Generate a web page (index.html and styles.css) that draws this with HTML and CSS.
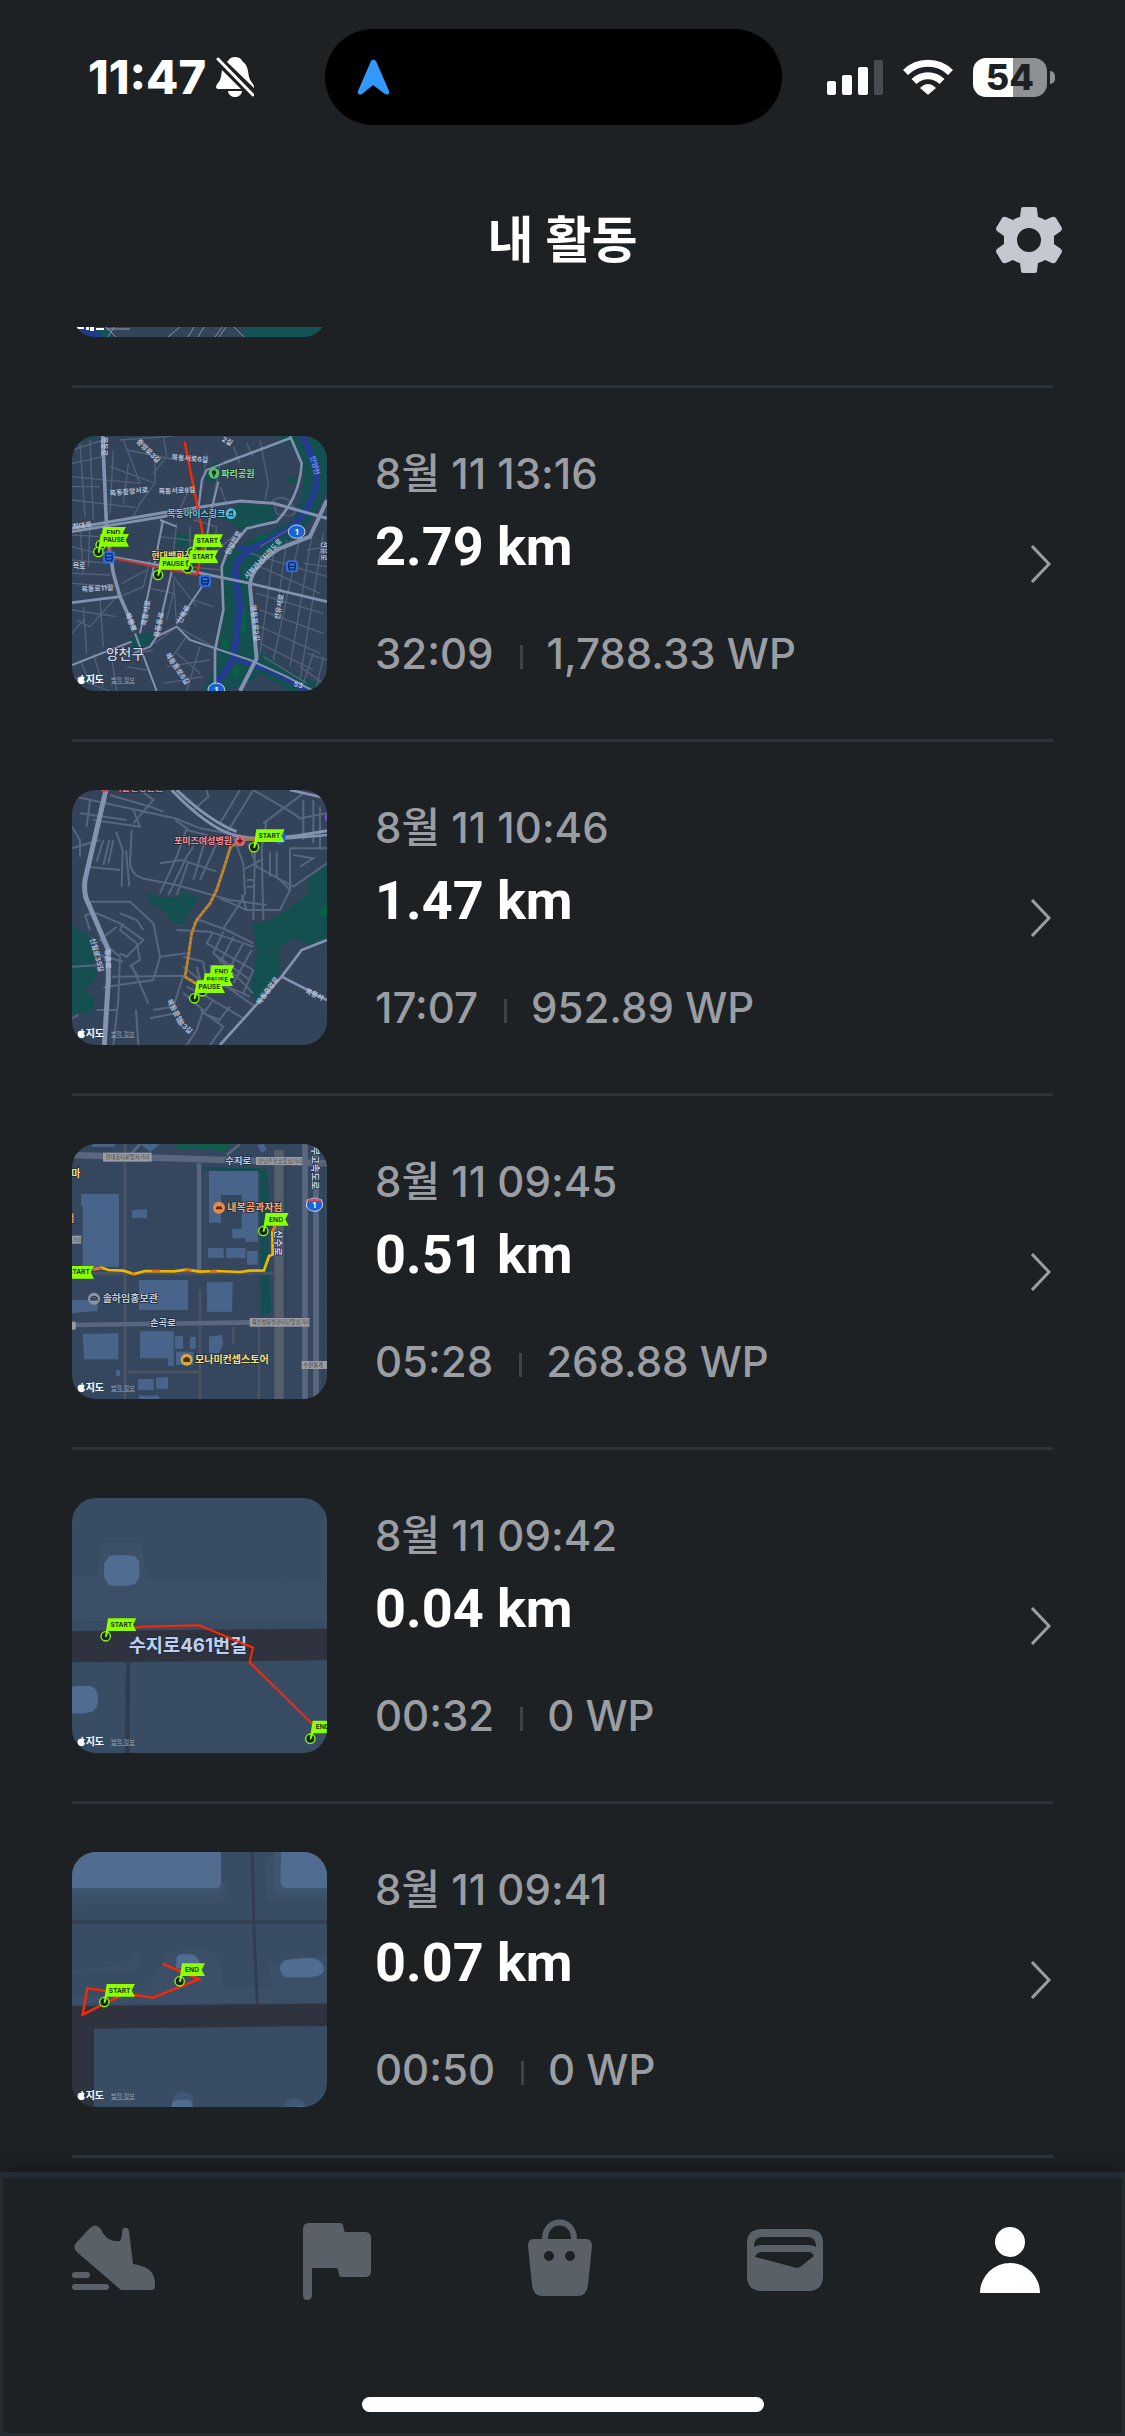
FILE: index.html
```
<!DOCTYPE html>
<html lang="ko">
  <head>
    <meta charset="UTF-8" />
    <meta name="viewport" content="width=device-width, initial-scale=1.0" />
    <title>내 활동</title>
    <link rel="stylesheet" href="styles.css" />
  </head>

  <body>
    <!-- shapes shared by all the maps -->
    <svg class="sprite" aria-hidden="true">
      <defs>
        <g id="flag-long">
          <circle r="14" fill="#1a2420" stroke="#8cff00" stroke-width="4" />
          <path d="M7 -54H92L82 -35L92 -16H9L3 2H-2Z" fill="#8cff00" />
        </g>
        <g id="flag-short">
          <circle r="14" fill="#1a2420" stroke="#8cff00" stroke-width="4" />
          <path d="M7 -54H76L66 -35L76 -16H9L3 2H-2Z" fill="#8cff00" />
        </g>
        <g id="apple">
          <path d="M11 6C15 3 21 5 22 8C18 11 19 17 23 19C21 26 17 29 12 26C6 29 1 22 1 15C1 7 6 4 11 6Z" fill="#fff" />
          <path d="M11 5C11 1 14 -1 17 -1C17 3 14 5 11 5Z" fill="#fff" />
        </g>
        <g id="station">
          <rect x="-18" y="-18" width="36" height="36" rx="9" fill="#2d6fe0" />
          <rect x="-10" y="-11" width="20" height="20" rx="5" fill="none" stroke="#0d2a5c" stroke-width="4" />
          <path d="M-10 0H10M-8 13L-5 9M8 13L5 9" stroke="#0d2a5c" stroke-width="4" />
        </g>
      </defs>
    </svg>

    <div class="app">
      <div class="status-bar">
        <div class="status-left">
          <span class="time">11:47</span>
          <svg class="bell" viewBox="0 0 38 42" fill="#fff">
            <path d="M19 1C24 1 26 4 27 6C32 9 32 16 33 21C34 25 37 27 38 30V32L11 6C13 4 14 1 19 1Z" />
            <path d="M6 14L25 33H2C-1 33 0 29 2 27C5 24 5 20 6 14Z" />
            <path d="M12 35H26C25 43 13 43 12 35Z" />
            <path d="M2 3L37 39" stroke="#fff" stroke-width="3" stroke-linecap="round" />
          </svg>
        </div>
        <div class="island">
          <svg viewBox="0 0 33 36">
            <path d="M14 2Q16 -1 19 2L32 32Q33 37 28 35L16 26L5 35Q0 37 1 32Z" fill="#3299ff" />
          </svg>
        </div>
        <div class="status-right">
          <svg class="signal" viewBox="0 0 56 35" fill="#fff">
            <rect y="21" width="9" height="14" rx="2" />
            <rect x="15" y="15" width="10" height="20" rx="2" />
            <rect x="31" y="7" width="10" height="28" rx="2" />
            <rect x="47" width="9" height="35" rx="2" fill="#484c50" />
          </svg>
          <svg class="wifi" viewBox="0 0 50 36">
            <path d="M2.500 13.500A32 32 0 0 1 47.500 13.500" fill="none" stroke="#fff" stroke-width="7" />
            <path d="M11 22.500A20 20 0 0 1 39 22.500" fill="none" stroke="#fff" stroke-width="7" />
            <path d="M17 29Q25 21 33 29L26 35Q25 36 24 35Z" fill="#fff" />
          </svg>
          <div class="battery">
            <span class="battery-body">54</span>
            <span class="battery-nub"></span>
          </div>
        </div>
      </div>

      <header class="header">
        <h1>내 활동</h1>
        <button class="settings" type="button" aria-label="설정">
          <svg viewBox="0 0 66 66">
            <path fill="#c5c8d0" fill-rule="evenodd" d="M27 0H39Q41 0 41 2L42 10Q46 11 49 13L56 10Q58 9 60 11L66 21Q66 23 65 24L58 29V37L65 42Q66 43 66 45L60 55Q58 57 56 56L49 53Q46 55 42 56L41 64Q41 66 39 66H27Q25 66 25 64L24 56Q20 55 17 53L10 56Q8 57 6 55L0 45Q0 43 1 42L8 37V29L1 24Q0 23 0 21L6 11Q8 9 10 10L17 13Q20 11 24 10L25 2Q25 0 27 0ZM33 21A12 12 0 1 0 33 45A12 12 0 1 0 33 21Z" />
          </svg>
        </button>
      </header>

      <main class="activities">
        <div class="scrolled-item">
          <div class="scrolled-map">
            <svg class="map" viewBox="0 -245 255 255">
              <path d="M0 -245H255V10H0Z" fill="#33435a" />
              <path d="M0 -30H26L30 10H0Z" fill="#213b8c" />
              <path d="M24 0H33L40 10H30Z" fill="#125455" />
              <path d="M172 -30H255V10H172Z" fill="#125455" />
              <path d="M34 0L44 10M36 10L42 0M116 10L122 0M126 10L132 0M143 10L150 0M147 10L154 0M162 0L172 10M96 10L108 0" stroke="#8391aa" />
              <path d="M5 0H12V2H5ZM14 0H17V3H14ZM18 0H22V4H18ZM24 1H32V3H24Z" fill="#fff" />
              <path d="M34 2H58" stroke="#93a0b4" />
            </svg>
          </div>
        </div>

        <ul class="activity-list">
          <li>
            <a class="activity" href="#">
              <svg class="map" viewBox="36 48 765 765">
                <rect x="36" y="48" width="765" height="765" fill="#334359" />
                <g fill="#13504f">
                  <path d="M680 48H801V210Q780 270 730 325L640 400L590 450Q560 500 575 560L590 690L700 760L801 800V813H690L600 760Q560 813 430 813L465 740L490 590L480 440L530 380L700 300Q740 230 725 130Z" />
                  <path d="M465 290L540 252L635 258Q655 290 640 312L540 330L510 305Z" />
                  <path d="M430 180L465 122L482 140L470 185ZM346 340H390V382H346ZM210 655L260 635L285 655L245 685L215 682ZM655 48H690V70H660ZM684 174H711V191H684ZM60 48H110V60H70Z" />
                </g>
                <path d="M538 560H556V640H538ZM485 655H502V680H485ZM522 735L545 745L530 770H518ZM590 340L640 350L600 380Z" fill="#0b6145" />
                <path d="M728 48L755 110Q780 150 765 205Q745 280 690 325L600 375Q530 400 525 460L540 560L520 720L470 790" fill="none" stroke="#233c90" stroke-width="20" />
                <path d="M520 715L650 760L740 813M530 380L590 392" fill="none" stroke="#233c90" stroke-width="14" />
                <g fill="none" stroke="#51617a" stroke-width="4">
                  <path d="M36 90L130 60M36 130L130 110M36 170L240 190M60 70L75 290M90 60L100 300M36 200H120M36 240L225 262M160 90L150 280M190 60L240 190M150 140L285 190M205 130L190 250M240 60L285 120L285 190L240 250L220 290M310 48L320 110L280 160" />
                  <path d="M180 60L340 48M200 90L350 120M36 345L120 350M36 380L110 400M60 320L70 460M90 310L85 440M36 420L145 430M36 460L150 465M36 490L165 500M36 570L170 590M70 560L80 700M120 540L130 680M170 530L90 620L50 600M36 640L70 600M305 300L290 420M350 310L335 450M300 350L420 365M290 430L480 450M390 320V410" />
                  <path d="M270 505L340 520L320 600M340 480L350 615M185 490L260 450M180 530L250 500L270 420M340 470L410 560M400 540L460 560M440 100L430 180L410 300M480 130L450 290M560 70L580 110M520 80L540 130M600 60L625 190L615 240M480 200L500 250M400 300L470 320L460 400L530 340M390 200L350 290" />
                  <path d="M570 400L801 470M640 400L600 700M680 360L650 580M720 350L640 720M760 320L690 740M790 340L720 780M600 440L780 520M590 520L790 580M600 570L790 640M600 620L780 700M600 670L760 750M610 710L740 790M740 390L801 380M730 430L801 440M640 240Q680 220 700 260T650 280Z" />
                  <path d="M36 770L150 813M60 720L90 790M100 700L130 800M150 680L170 813M190 710L280 690M200 740L260 750M270 680L350 620L460 680M350 700L420 760M380 650L330 720M420 680L380 813M320 740L450 720M310 790L430 770M740 700L801 720M720 740L790 790M760 700L730 790M790 710L770 800M600 380L700 320" />
                </g>
                <g fill="none" stroke="#8191ae" stroke-width="8">
                  <path d="M128 48L140 330L160 460L180 530L225 630" stroke-width="11" />
                  <path d="M36 325L300 280L540 243L640 250L801 295" stroke-width="9" />
                  <path d="M36 335L310 290L420 262M36 548L180 530M150 410L400 455L570 490L801 545M490 130L690 55M400 800" />
                  <path d="M690 48L725 130Q720 230 650 305L560 325L500 400L485 440L490 570L465 690V813" />
                  <path d="M801 240L750 350L660 385Q570 440 570 500L590 715L540 813" stroke-width="12" />
                  <path d="M300 300L350 320M310 300L240 640M335 455L290 650L350 620L390 660L570 720L680 770L760 813M36 735L150 690L215 665M440 480L350 610M475 185L450 290L430 430M490 130L440 150L425 180L415 270M225 640L290 813M220 700L270 680L290 650" stroke-width="6" />
                </g>
                <path d="M374 65L432 360L412 465" fill="none" stroke="#ff2600" stroke-width="7" />
                <path d="M150 385L160 415L412 465" fill="none" stroke="#bd3733" stroke-width="6" />
                <g class="road-text">
                  <text x="334" y="118" transform="rotate(5 334 118)">목동서로6길</text>
                  <text x="150" y="228" transform="rotate(-6 150 228)">목동중앙서로</text>
                  <text x="296" y="222" transform="rotate(-3 296 222)">목동서로8길</text>
                  <text x="228" y="66" transform="rotate(45 228 66)">중앙로3길</text>
                  <text x="125" y="50" transform="rotate(90 125 50)">목동로</text>
                  <text x="484" y="62" transform="rotate(30 484 62)">2길</text>
                  <text x="38" y="328" transform="rotate(-8 38 328)">희대로</text>
                  <text x="38" y="445">목로</text>
                  <text x="65" y="516" transform="rotate(-4 65 516)">목동로11길</text>
                  <text x="195" y="582" transform="rotate(68 195 582)">목동로</text>
                  <text x="258" y="618" transform="rotate(-80 258 618)">목동서로</text>
                  <text x="296" y="654" transform="rotate(-78 296 654)">목동동로</text>
                  <text x="362" y="612" transform="rotate(-60 362 612)">신목로</text>
                  <text x="508" y="406" transform="rotate(-62 508 406)">안양천로</text>
                  <text x="562" y="478" transform="rotate(-47 562 478)">서부간선지하도로</text>
                  <text x="572" y="555" transform="rotate(84 572 555)">영등포로2길</text>
                  <text x="658" y="600" transform="rotate(-80 658 600)">선유서로</text>
                  <text x="315" y="704" transform="rotate(56 315 704)">목동동로6길</text>
                  <text x="786" y="364" transform="rotate(90 786 364)">선유로</text>
                  <text x="700" y="798" transform="rotate(15 700 798)">53</text>
                </g>
                <text class="river-text" x="750" y="110" transform="rotate(75 750 110)">안양천</text>
                <circle cx="462" cy="160" r="16" fill="#5cc06a" />
                <path d="M462 150A8 8 0 0 1 464 165V171H460V165A8 8 0 0 1 462 150Z" fill="#123a26" />
                <text class="poi" x="484" y="171" fill="#84e28d">파리공원</text>
                <text class="poi" x="322" y="291" fill="#70c7de">목동아이스링크</text>
                <circle cx="513" cy="281" r="16" fill="#52b9d7" />
                <path d="M505 287H521M509 283V277L517 274V283" fill="none" stroke="#12384a" stroke-width="4" />
                <text class="poi" x="274" y="418" fill="#ffcf5a">현대백화점</text>
                <text class="district" x="137" y="716">양천구</text>
                <use href="#station" x="147" y="412" />
                <use href="#station" x="435" y="483" />
                <use href="#station" x="696" y="439" />
                <ellipse cx="710" cy="335" rx="25" ry="20" fill="#1b62d4" stroke="#c7d8f5" stroke-width="3" />
                <text class="shield" x="710" y="344">1</text>
                <ellipse cx="469" cy="809" rx="25" ry="20" fill="#1b62d4" stroke="#c7d8f5" stroke-width="3" />
                <text class="shield" x="469" y="818">1</text>
                <use href="#flag-short" x="122" y="375" />
                <text class="flag-text" x="160" y="346">END</text>
                <use href="#flag-long" x="115" y="396" />
                <text class="flag-text" x="162" y="367">PAUSE</text>
                <use href="#flag-long" x="397" y="397" />
                <text class="flag-text" x="442" y="370">START</text>
                <use href="#flag-long" x="383" y="445" />
                <text class="flag-text" x="429" y="417">START</text>
                <use href="#flag-long" x="294" y="465" />
                <text class="flag-text" x="340" y="437">PAUSE</text>
                <use href="#apple" x="52" y="765" />
                <text class="brand" x="77" y="789">지도</text>
                <text class="legal" x="153" y="787">법적 정보</text>
              </svg>
              <div class="info">
                <p class="date">8월 11 13:16</p>
                <p class="distance">2.79 km</p>
                <p class="stats"><span>32:09</span><span class="points">1,788.33 WP</span></p>
              </div>
              <svg class="chevron" viewBox="0 0 20 38"><path d="M1 1L18 19L1 37" /></svg>
            </a>
          </li>

          <li>
            <a class="activity" href="#">
              <svg class="map" viewBox="36 30 765 765">
                <rect x="36" y="30" width="765" height="765" fill="#334359" />
                <g fill="#155050">
                  <path d="M256 338L300 350L350 352L375 335L418 352L390 390L370 432L330 425L315 395L270 370Z" />
                  <path d="M801 255V485L750 495L700 475L660 500V580L590 665L570 630L590 520L580 430L620 425L690 385L745 340V290Z" />
                  <path d="M36 435V700H95L105 655L70 630L105 600V560L90 470Z" />
                </g>
                <path d="M801 375L775 400L790 412L801 405Z" fill="#086149" />
                <g fill="none" stroke="#56667f" stroke-width="6">
                  <path d="M36 48L220 88L345 115L420 145L560 170M150 45L270 80L310 95M240 30L280 60L220 130M36 140L60 180V230M36 205L120 180M60 100L200 120M90 60L80 140M100 120L240 140L220 90M130 180L110 245M148 180L130 255M160 180L145 250M80 260L180 270M168 155L188 210L185 320M198 210L208 320" />
                  <path d="M215 150L210 250Q215 290 260 298L350 315L510 360L620 375M345 120L380 145L350 230L300 340M380 150L440 165L400 300M300 250L365 240L470 275M325 345L380 230L400 200M350 345L385 245M440 185L480 195M420 300L470 190M540 30L480 130M580 30L500 160M440 30L445 50L400 90M580 30L700 100L720 115L801 100" />
                  <path d="M610 130L730 40M520 170L550 250L555 340L540 370L490 445M585 210L580 420M605 200L610 420M550 270L610 235M565 190L590 260L700 320L801 250M620 120L605 205M690 205V330L660 390H560L480 355M630 215V290M650 215V290L690 330M700 225L760 235L720 260M730 60V180M760 60V190M780 80V210M690 205H801M560 300H580M560 320H580M545 345L560 390" />
                  <path d="M75 365H210L280 430L300 530L280 600L130 622M75 405L110 400L180 430L250 480L200 530L180 520M75 405L90 450M180 400L230 420L250 450M170 440L120 480L180 530L175 660L160 795M190 430L180 450L230 490L240 540L215 555L265 670M100 520L190 545M155 590L370 587L340 680L280 690M270 715L345 700M300 530L380 520" />
                  <path d="M350 450L450 455L580 500M400 430L420 420L500 450L580 490M370 530L430 545M370 560L420 600L500 620L585 680M460 455L440 490L580 570M490 455L460 520L570 600M520 470L480 550M550 490L500 580M575 510L520 610M580 570L550 640M470 530L580 640M410 560L420 600M430 545L440 610L500 620M450 555L460 600L570 650M380 620L440 650L550 715M370 640L430 690L410 750L380 795M420 690L490 740L450 795M460 660L430 700L480 720M510 680L470 730M210 555L235 590M110 690H170M228 690L235 795M36 715L55 705M36 560L130 555" />
                </g>
                <g fill="none" stroke="#8292af">
                  <path d="M138 30L75 300Q70 345 85 370L145 510V600L133 795" stroke-width="15" />
                  <path d="M335 30Q440 140 520 165T801 152M350 30Q450 125 530 155" stroke-width="9" />
                  <path d="M540 178Q650 180 801 165M690 30L801 55" stroke-width="8" />
                  <path d="M801 480L725 510L665 590L480 795M665 590L801 660" stroke-width="8" />
                </g>
                <path d="M595 180L555 175L512 200L490 270L470 330L450 370L410 420L395 460L385 530L375 590L410 612" fill="none" stroke="#a97a38" stroke-width="9" />
                <path d="M512 200L490 270L470 330L450 370L410 420L395 460L385 530L375 590L410 612" fill="none" stroke="#e09a24" stroke-width="4" stroke-dasharray="6 9" />
                <g class="road-text">
                  <text x="90" y="476" transform="rotate(75 90 476)">신월로35길</text>
                  <text x="135" y="508" transform="rotate(88 135 508)">등촌로</text>
                  <text x="320" y="662" transform="rotate(62 320 662)">목동중앙</text>
                  <text x="350" y="728" transform="rotate(42 350 728)">로3길</text>
                  <text x="600" y="676" transform="rotate(-54 600 676)">목동중앙로</text>
                  <text x="734" y="638" transform="rotate(25 734 638)">목동서</text>
                </g>
                <text class="poi" x="160" y="33" fill="#ef7480">서울현병원원</text>
                <circle cx="134" cy="22" r="14" fill="#ce4958" />
                <text class="poi" x="342" y="193" fill="#ff8d96">포미즈여성병원</text>
                <circle cx="540" cy="183" r="16" fill="#db626e" />
                <path d="M540 175V191M532 183H548" stroke="#42121a" stroke-width="4" />
                <circle cx="806" cy="113" r="12" fill="#7a4fc9" />
                <ellipse cx="660" cy="172" rx="17" ry="20" fill="#2368d4" />
                <use href="#flag-long" x="582" y="202" />
                <text class="flag-text" x="628" y="174">START</text>
                <use href="#flag-short" x="447" y="610" />
                <text class="flag-text" x="484" y="582">END</text>
                <use href="#flag-long" x="427" y="634" />
                <text class="flag-text" x="472" y="606">PAUSE</text>
                <use href="#flag-long" x="403" y="655" />
                <text class="flag-text" x="448" y="627">PAUSE</text>
                <use href="#apple" x="52" y="747" />
                <text class="brand" x="77" y="771">지도</text>
                <text class="legal" x="153" y="769">법적 정보</text>
              </svg>
              <div class="info">
                <p class="date">8월 11 10:46</p>
                <p class="distance">1.47 km</p>
                <p class="stats"><span>17:07</span><span class="points">952.89 WP</span></p>
              </div>
              <svg class="chevron" viewBox="0 0 20 38"><path d="M1 1L18 19L1 37" /></svg>
            </a>
          </li>

          <li>
            <a class="activity" href="#">
              <svg class="map" viewBox="36 42 765 765">
                <rect x="36" y="42" width="765" height="765" fill="#35475f" />
                <path d="M350 42H520L490 65L400 55L350 60Z" fill="#145a4d" />
                <path d="M428 110L620 116L628 200L625 400L635 545L602 560L600 125L428 120Z" fill="#134f50" />
                <g fill="none" stroke="#4a5361">
                  <path d="M195 42V807M205 725H420M36 430H640" stroke-width="9" />
                  <path d="M420 480V807M597 580V807M520 590V640" stroke-width="8" />
                  <path d="M657 60V807" stroke="#555e6c" stroke-width="28" />
                </g>
                <g fill="none" stroke="#58677d">
                  <path d="M36 75L800 100" stroke-width="20" />
                  <path d="M417 100V430" stroke-width="13" />
                  <path d="M36 585L650 576" stroke-width="14" />
                  <path d="M735 42V807M768 42V807" stroke-width="17" />
                  <path d="M215 70L240 42M500 75L540 42" stroke-width="8" />
                </g>
                <path d="M677 110V560M790 100V800" stroke="#2a3546" stroke-width="3" stroke-dasharray="5 5" />
                <g fill="#49648a">
                  <path d="M63 192H177V410H68V228H63ZM216 240L261 237V264H216ZM237 450H384V540H237ZM441 457L518 456L516 545H441ZM36 510H113V543L36 549ZM68 612L175 610V688H72ZM240 604H341V708H324V685H240ZM345 618H369V656H345ZM390 621H407V656H390ZM348 665H400V705H348ZM447 620L485 614L490 640L478 670H447ZM234 747H281V780H234ZM288 744L324 740V776H288ZM237 797H297V807H237Z" />
                  <path d="M447 123H594V335H556V325H517V296H545V195H483V278H447ZM444 354H491V384H444ZM498 354H557V384H498ZM561 363H593V404H561ZM240 42H300L270 66ZM592 45L612 42L620 60L605 68ZM95 42H165V50H95ZM168 720H180V738H168Z" />
                </g>
                <path d="M100 418L125 413L145 420L190 422L222 432L255 423L340 424L380 419L420 425L470 423L540 426L570 422L612 421L627 378L638 374L637 305L645 288" fill="none" stroke="#efb700" stroke-width="8" />
                <path d="M100 418L125 413M215 429L225 431M275 423L300 423M375 419L395 421M450 423L470 423M637 305L645 288" fill="none" stroke="#f26a10" stroke-width="6" />
                <g class="tag">
                  <rect x="129" y="68" width="146" height="27" />
                  <rect x="588" y="81" width="139" height="24" />
                  <rect x="569" y="564" width="180" height="26" />
                  <rect x="725" y="693" width="90" height="24" />
                  <rect x="20" y="317" width="44" height="24" />
                  <rect x="20" y="575" width="27" height="24" />
                </g>
                <g class="tag-text">
                  <text x="136" y="88">현대홈타운앞사거리</text>
                  <text x="594" y="99">만남주유소앞삼거리</text>
                  <text x="575" y="583">죽전성봉빌관리단앞삼거리</text>
                  <text x="730" y="711">수원톨게</text>
                  <text x="36" y="335">거리</text>
                </g>
                <g class="street">
                  <text x="496" y="101">수지로</text>
                  <text x="270" y="588">손곡로</text>
                  <text x="645" y="300" transform="rotate(90 645 300)">신수로</text>
                  <text x="755" y="50" transform="rotate(90 755 50)">부고속도로</text>
                </g>
                <text class="poi-big" x="34" y="140" fill="#ffdf78">마</text>
                <text class="poi-big" x="16" y="277" fill="#ff9c62">점</text>
                <circle cx="477" cy="233" r="18" fill="#f0884b" />
                <path d="M467 238L472 227L477 232L482 227L487 238Z" fill="#4d2410" />
                <text class="poi-big" x="502" y="243" fill="#ffa565">내복곰과자점</text>
                <circle cx="102" cy="506" r="18" fill="#8c96a5" />
                <path d="M93 512V504Q102 494 111 504V512M99 512V506H105V512" fill="none" stroke="#242c38" stroke-width="4" />
                <text class="poi-big" x="128" y="516" fill="#c4ccd9">솔하임홍보관</text>
                <circle cx="380" cy="689" r="18" fill="#d6a945" />
                <path d="M370 685H390V696H370ZM375 685V681H385V685" fill="#473512" />
                <text class="poi-big" x="405" y="700" fill="#ffe275">모나미컨셉스토어</text>
                <path d="M742 210L763 204L785 210L788 228Q780 244 763 244Q744 242 739 228Z" fill="#1b62d4" stroke="#d5e0f2" stroke-width="3" />
                <path d="M743 209L763 205L784 209V214H743Z" fill="#e24a4e" />
                <text class="shield" x="763" y="235">1</text>
                <use href="#flag-short" x="610" y="303" />
                <text class="flag-text" x="648" y="275">END</text>
                <use href="#flag-long" x="10" y="462" />
                <text class="flag-text" x="57" y="433">START</text>
                <use href="#apple" x="52" y="759" />
                <text class="brand" x="77" y="783">지도</text>
                <text class="legal" x="153" y="781">법적 정보</text>
              </svg>
              <div class="info">
                <p class="date">8월 11 09:45</p>
                <p class="distance">0.51 km</p>
                <p class="stats"><span>05:28</span><span class="points">268.88 WP</span></p>
              </div>
              <svg class="chevron" viewBox="0 0 20 38"><path d="M1 1L18 19L1 37" /></svg>
            </a>
          </li>

          <li>
            <a class="activity" href="#">
              <svg class="map" viewBox="36 24 765 765">
                <rect x="36" y="24" width="765" height="765" fill="#384c63" />
                <path d="M36 257L110 258L122 158H246L258 264L780 266L792 250V24H801V390L36 394Z" fill="#3b5067" />
                <path d="M36 423L801 416V511L36 517Z" fill="#2e333f" />
                <path d="M198 517H210L209 789H195Z" fill="#323a4b" />
                <path d="M148 198Q185 192 225 198L238 215V262L225 282Q185 294 145 284L132 262V220ZM36 590Q70 584 98 590Q115 600 114 630Q115 655 95 665Q65 675 36 669Z" fill="#506d91" />
                <path d="M222 413L245 410L418 406L579 473L569 517L760 705" fill="none" stroke="#ff2600" stroke-width="6" />
                <text class="street-big" x="206" y="486">수지로461번길</text>
                <path d="M496 440L579 473" fill="none" stroke="#ff2600" stroke-width="6" />
                <use href="#flag-long" x="137" y="439" />
                <text class="flag-text" x="184" y="411">START</text>
                <use href="#flag-short" x="751" y="746" />
                <text class="flag-text" x="788" y="718">END</text>
                <use href="#apple" x="52" y="741" />
                <text class="brand" x="77" y="765">지도</text>
                <text class="legal" x="153" y="763">법적 정보</text>
              </svg>
              <div class="info">
                <p class="date">8월 11 09:42</p>
                <p class="distance">0.04 km</p>
                <p class="stats"><span>00:32</span><span class="points">0 WP</span></p>
              </div>
              <svg class="chevron" viewBox="0 0 20 38"><path d="M1 1L18 19L1 37" /></svg>
            </a>
          </li>

          <li>
            <a class="activity" href="#">
              <svg class="map" viewBox="36 36 765 765">
                <rect x="36" y="36" width="765" height="765" fill="#384c63" />
                <path d="M36 145L500 130L505 165L488 188L36 195ZM612 60L640 36H801V184H620Z" fill="#3b5067" />
                <path d="M36 390L205 375L232 330L250 340L220 395L36 405ZM36 470L255 450L320 345L400 318L440 325L485 365L490 445L640 443L623 370L801 345V490H36Z" fill="#3b5067" />
                <path d="M36 145L485 100V150L470 165H36ZM642 36H801V164H660L642 155Z" fill="#3f5672" />
                <path d="M36 36H483V125Q482 144 465 144H36ZM663 36H801V144H680Q662 142 662 125ZM350 350Q360 340 385 343Q418 345 418 370V385H348ZM675 360L740 353Q790 352 792 392Q790 405 755 412H675Q658 395 660 382Q663 368 675 360Z" fill="#506d91" />
                <path d="M36 246H801M577 36L582 270L592 495" fill="none" stroke="#343d4f" stroke-width="9" />
                <path d="M36 498L801 491V558L102 566V801H36Z" fill="#2e333f" />
                <path d="M340 770Q350 756 370 757Q398 756 399 780V801H335ZM672 801Q675 775 700 774Q725 772 738 801Z" fill="#405875" />
                <path d="M334 801Q335 782 350 780H385Q396 782 398 801ZM705 801L720 797L735 801Z" fill="#506d91" />
                <path d="M310 372L417 418L279 473L82 445L68 524L180 468" fill="none" stroke="#ff2600" stroke-width="7" stroke-linecap="round" />
                <use href="#flag-long" x="133" y="486" />
                <text class="flag-text" x="179" y="458">START</text>
                <use href="#flag-short" x="359" y="424" />
                <text class="flag-text" x="396" y="396">END</text>
                <use href="#apple" x="52" y="753" />
                <text class="brand" x="77" y="777">지도</text>
                <text class="legal" x="153" y="775">법적 정보</text>
              </svg>
              <div class="info">
                <p class="date">8월 11 09:41</p>
                <p class="distance">0.07 km</p>
                <p class="stats"><span>00:50</span><span class="points">0 WP</span></p>
              </div>
              <svg class="chevron" viewBox="0 0 20 38"><path d="M1 1L18 19L1 37" /></svg>
            </a>
          </li>
        </ul>
      </main>

      <nav class="tab-bar">
        <div class="tabs">
          <a class="tab" href="#" aria-label="걷기">
            <svg viewBox="0 0 90 90">
              <path d="M23 13Q28 8 33 13C37 20 41 26 49 26H53C56 22 54 14 57 13Q61 12 62 16L66 49C80 51 88 56 88 69V71Q88 75 84 75H54L11 38Q5 33 9 28Z" />
              <rect x="5" y="57" width="18" height="6" rx="3" />
              <rect x="5" y="69" width="37" height="6" rx="3" />
            </svg>
          </a>
          <a class="tab" href="#" aria-label="챌린지">
            <svg viewBox="0 0 90 90">
              <path d="M17 8H48Q50 8 51 10L52 15Q52 17 55 17H73Q79 17 79 23V56Q79 62 73 62H50Q47 62 47 59L46 55Q46 53 43 53H20V80Q20 85 15 85Q11 85 11 80V14Q11 8 17 8Z" />
            </svg>
          </a>
          <a class="tab" href="#" aria-label="상점">
            <svg viewBox="0 0 90 90">
              <path d="M29 25V24C29 2 58 2 58 24V25" fill="none" stroke="#5a6067" stroke-width="6" />
              <path fill-rule="evenodd" d="M17 24H70Q76 24 76 31L72 70Q71 81 61 81H27Q17 81 16 70L12 31Q12 24 17 24ZM33 36A5 5 0 1 0 33 46A5 5 0 1 0 33 36ZM54 36A5 5 0 1 0 54 46A5 5 0 1 0 54 36Z" />
            </svg>
          </a>
          <a class="tab" href="#" aria-label="지갑">
            <svg viewBox="0 0 90 90">
              <path fill-rule="evenodd" d="M22 14H68Q83 14 83 28V61Q83 76 68 76H22Q7 76 7 61V28Q7 14 22 14ZM14 32Q17 30 21 30H68Q73 30 76 32Q76 22 68 22H22Q14 22 14 32ZM22 37Q17 37 15 42L57 53L60 52L74 41Q72 37 69 37Z" />
            </svg>
          </a>
          <a class="tab active" href="#" aria-label="내 활동">
            <svg viewBox="0 0 90 90">
              <circle cx="45" cy="27" r="15" />
              <path d="M15 78A30 30 0 0 1 75 78Z" />
            </svg>
          </a>
        </div>
        <div class="home-indicator"></div>
      </nav>
    </div>
  </body>
</html>
```
FILE: styles.css
```
* {
  padding: 0;
  margin: 0;
  box-sizing: border-box;
}

body {
  background: #1d2124;
  color: #fff;
  font-family: Inter, "Noto Sans CJK KR", sans-serif;
}

a {
  color: inherit;
  text-decoration: none;
}

svg {
  display: block;
  flex-shrink: 0;
}

.sprite {
  position: absolute;
  width: 0;
  height: 0;
}

.app {
  display: flex;
  flex-direction: column;
  height: 100vh;
}

/* status bar */
.status-bar {
  display: grid;
  grid-template-columns: 325fr 457fr 343fr;
  align-items: center;
  height: 154px;
}

.status-left {
  display: flex;
  align-items: center;
  gap: 10px;
  padding-left: 88px;
}

.time {
  font-size: 47px;
  font-weight: 800;
  line-height: 48px;
}

.bell {
  width: 38px;
  height: 42px;
}

.island {
  display: flex;
  align-items: center;
  height: 96px;
  padding-left: 32px;
  border-radius: 48px;
  background: #000;
}

.island svg {
  width: 33px;
  height: 36px;
}

.status-right {
  display: flex;
  align-items: center;
  gap: 20px;
  padding-left: 45px;
}

.signal {
  width: 56px;
  height: 35px;
}

.wifi {
  width: 50px;
  height: 36px;
}

.battery {
  display: flex;
  align-items: center;
  gap: 3px;
}

.battery-body {
  width: 74px;
  height: 39px;
  border-radius: 13px;
  background: linear-gradient(to right, #fff 54%, #8e9193 54%);
  color: #1d2124;
  font-size: 36px;
  font-weight: 800;
  line-height: 39px;
  text-align: center;
}

.battery-nub {
  width: 5px;
  height: 13px;
  border-radius: 0 6px 6px 0;
  background: #8e9193;
}

/* header */
.header {
  display: grid;
  grid-template-columns: 1fr auto 1fr;
  align-items: center;
  height: 173px;
  padding: 0 63px 2px;
}

.header h1 {
  grid-column: 2;
  font-size: 50px;
  font-weight: 700;
  line-height: 60px;
}

.settings {
  justify-self: end;
  width: 66px;
  height: 66px;
  border: none;
  background: none;
  cursor: pointer;
}

/* activities */
.activities {
  flex: 1;
  min-height: 0;
  padding: 0 72px;
  overflow: hidden;
}

.scrolled-item {
  padding-bottom: 48px;
  border-bottom: 3px solid #2b343d;
}

.scrolled-map {
  display: flex;
  align-items: flex-end;
  height: 10px;
  overflow: hidden;
}

.activity-list {
  list-style: none;
}

.activity {
  display: flex;
  align-items: center;
  padding: 48px 0;
  border-bottom: 3px solid #2b343d;
}

.map {
  width: 255px;
  height: 255px;
  border-radius: 24px;
}

.info {
  flex: 1;
  margin-left: 48px;
}

.date,
.stats {
  color: #9a9ea3;
  font-size: 42px;
  font-weight: 500;
  line-height: 50px;
}

.distance {
  margin: 16px 0 50px;
  font-family: Roboto, sans-serif;
  font-size: 54px;
  font-weight: 700;
  line-height: 64px;
}

.stats {
  display: flex;
  align-items: center;
}

.points::before {
  content: "";
  display: inline-block;
  width: 3px;
  height: 24px;
  margin: 0 24px 0 26px;
  background: #3d4348;
}

.chevron {
  width: 20px;
  height: 38px;
  margin-right: 2px;
}

.chevron path {
  fill: none;
  stroke: #9a9ea3;
  stroke-width: 3;
}

/* text on the maps */
.road-text,
.river-text {
  fill: #b3c1da;
  font-size: 21px;
  font-weight: 700;
}

.river-text {
  fill: #6d8cec;
}

.poi,
.poi-big,
.street,
.street-big,
.district {
  font-weight: 700;
  paint-order: stroke;
  stroke: #202a3a;
  stroke-width: 4px;
}

.poi {
  font-size: 27px;
}

.poi-big {
  font-size: 30px;
}

.street {
  fill: #c3d1ea;
  font-size: 28px;
}

.street-big {
  fill: #bfd0ee;
  font-size: 56px;
}

.district {
  fill: #c9d3e6;
  font-size: 42px;
  font-weight: 500;
}

.tag {
  fill: #9a9ca0;
}

.tag-text {
  fill: #3f4348;
  font-size: 16px;
}

.shield {
  fill: #fff;
  font-size: 24px;
  font-weight: 700;
  text-anchor: middle;
}

.flag-text {
  fill: #14260a;
  font-size: 20px;
  font-weight: 600;
  text-anchor: middle;
}

.brand {
  fill: #fff;
  font-size: 30px;
  font-weight: 700;
}

.legal {
  fill: #93a0b4;
  font-size: 18px;
  text-decoration: underline;
}

/* tab bar */
.tab-bar {
  display: flex;
  flex-direction: column;
  align-items: center;
  justify-content: space-between;
  height: 264px;
  padding: 40px 0 24px;
  border-top: 3px solid #252b33;
  background: #1d2124;
  box-shadow: inset 0 0 0 3px #252b33, 0 -3px 15px rgba(0, 0, 0, 0.25);
}

.tabs {
  display: grid;
  grid-template-columns: repeat(5, 1fr);
  width: 100%;
  padding-right: 3px;
}

.tab {
  display: flex;
  justify-content: center;
  fill: #5a6067;
}

.tab.active {
  fill: #fff;
}

.tab svg {
  width: 90px;
  height: 90px;
}

.home-indicator {
  width: 402px;
  height: 15px;
  border-radius: 8px;
  background: #fff;
}
```
